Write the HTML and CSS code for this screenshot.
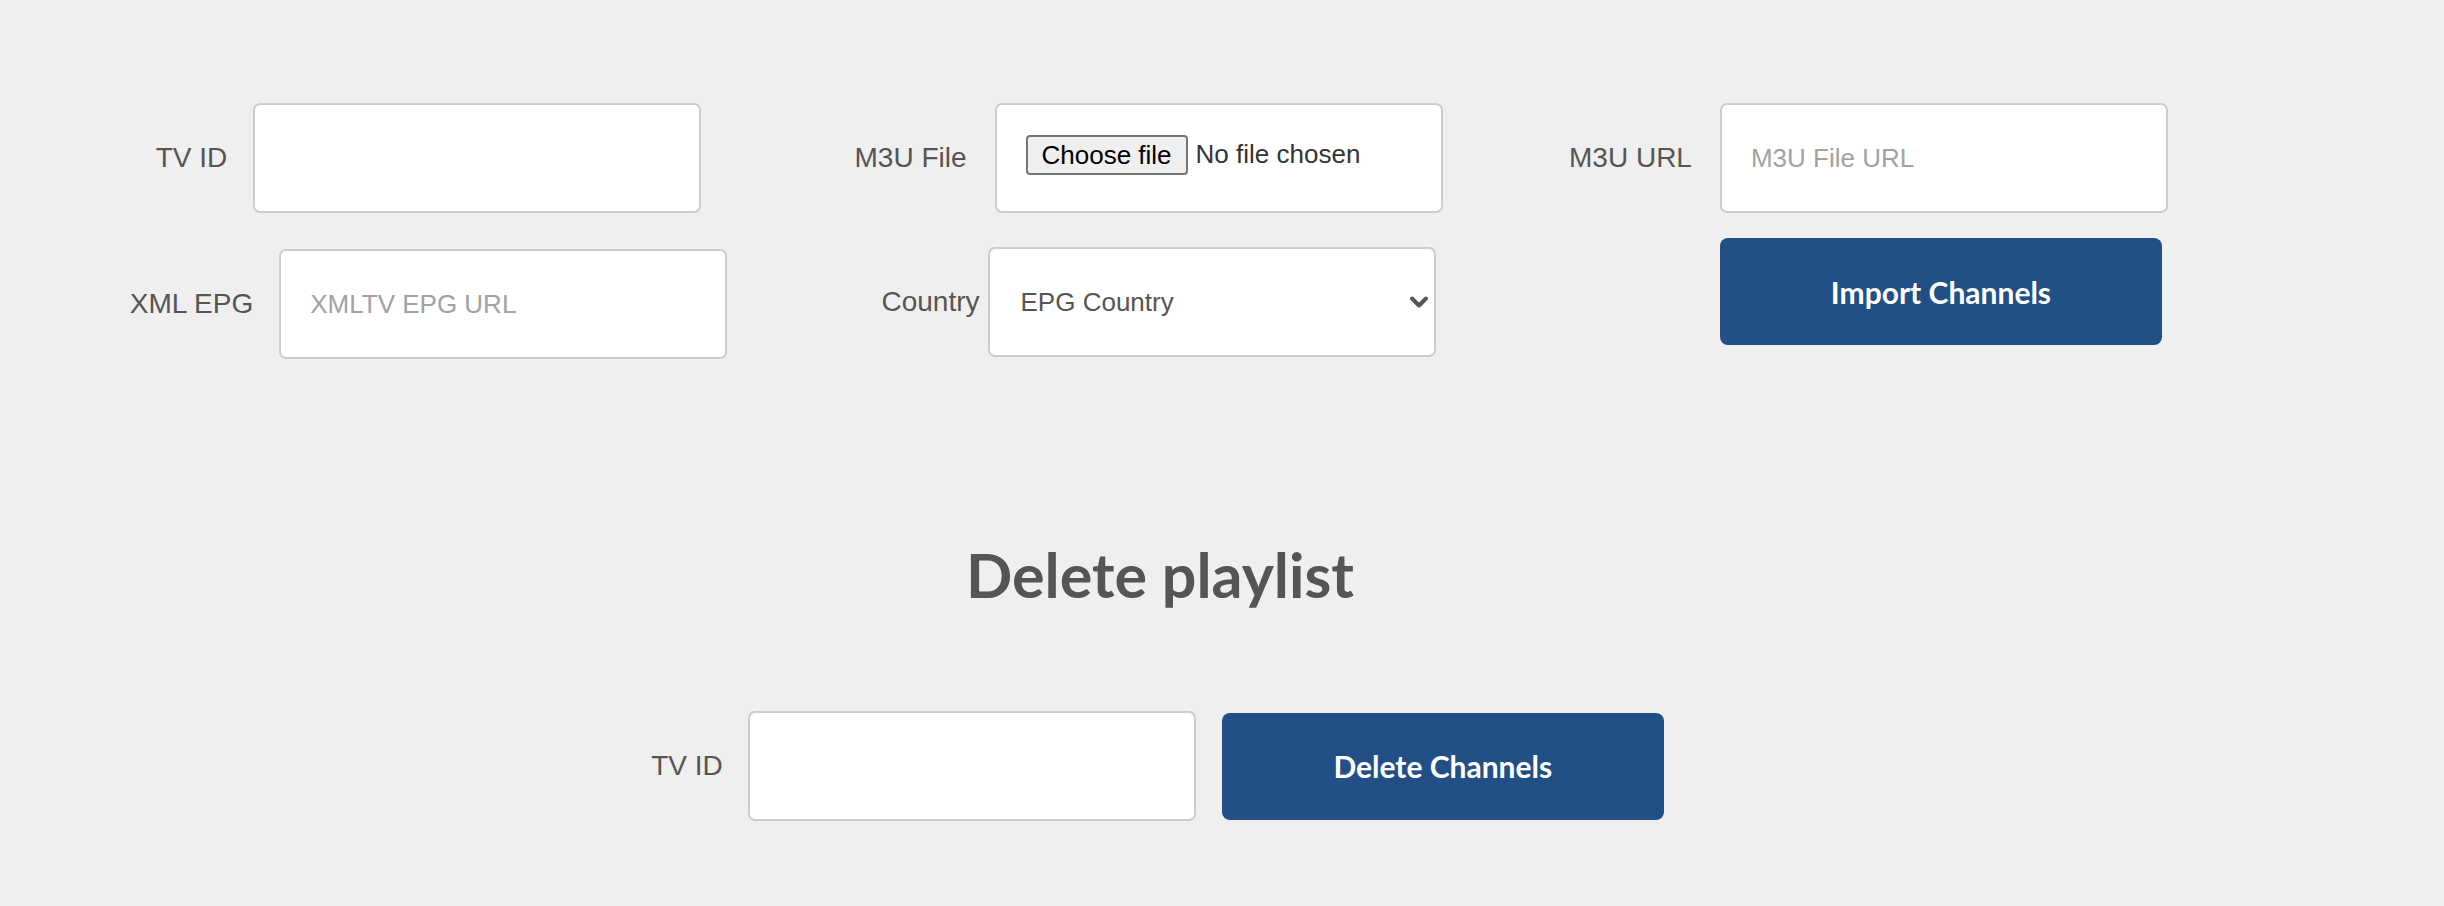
FILE: index.html
```html
<!DOCTYPE html>
<html lang="en">
<head>
<meta charset="utf-8">
<title>Channels</title>
<link rel="stylesheet" href="styles.css">
</head>
<body>
<main class="page">
  <section class="import-grid">
    <div class="col col-1">
      <div class="row">
        <label class="label" for="tvid">TV ID</label>
        <input class="box" id="tvid" type="text">
      </div>
      <div class="row">
        <label class="label" for="xmlepg">XML EPG</label>
        <input class="box" id="xmlepg" type="text" placeholder="XMLTV EPG URL">
      </div>
    </div>
    <div class="col col-2">
      <div class="row">
        <span class="label">M3U File</span>
        <div class="box file-box">
          <label class="file-btn" for="m3ufile">Choose file</label>
          <span class="file-name">No file chosen</span>
          <input class="file-input" id="m3ufile" type="file">
        </div>
      </div>
      <div class="row row-country">
        <label class="label" for="country">Country</label>
        <div class="select-wrap">
          <select class="box select" id="country">
            <option>EPG Country</option>
          </select>
          <svg class="chevron" width="18" height="12" viewBox="0 0 18 12" aria-hidden="true">
            <path d="M2 2.5 L9 9.5 L16 2.5" fill="none" stroke="#555" stroke-width="4" stroke-linecap="round" stroke-linejoin="round"/>
          </svg>
        </div>
      </div>
    </div>
    <div class="col col-3">
      <label class="label" for="m3uurl">M3U URL</label>
      <input class="box" id="m3uurl" type="text" placeholder="M3U File URL">
      <button class="btn btn-import" type="button">Import Channels</button>
    </div>
  </section>

  <h2 class="heading">Delete playlist</h2>

  <section class="delete-row">
    <label class="label" for="deltvid">TV ID</label>
    <input class="box" id="deltvid" type="text">
    <button class="btn" type="button">Delete Channels</button>
  </section>
</main>
</body>
</html>
```

FILE: styles.css
```css
* {
  box-sizing: border-box;
}

html, body {
  margin: 0;
  padding: 0;
  background: #efefef;
}

body {
  font-family: "Liberation Sans", Arial, sans-serif;
  color: #555;
}

.page {
  width: 2320px;
  padding-top: 103px;
}

.import-grid {
  display: grid;
  grid-template-columns: repeat(3, 720px);
  align-items: start;
  margin-left: 68.5px;
}

.col {
  display: flex;
  flex-direction: column;
  align-items: center;
}

.col-1 {
  gap: 36px;
}

.col-1 .row {
  gap: 26px;
}

.col-2 {
  gap: 34px;
}

.row {
  display: flex;
  align-items: center;
  justify-content: center;
  gap: 28px;
}

.row-country {
  gap: 8px;
  padding-left: 20px;
}

.col-3 {
  display: grid;
  grid-template-columns: auto 448px;
  column-gap: 28px;
  row-gap: 25px;
  justify-content: center;
  align-content: start;
  align-items: center;
}

.col-3 .btn-import {
  grid-column: 2;
}

.label {
  font-size: 28px;
  color: #555;
  white-space: nowrap;
}

.box {
  width: 448px;
  height: 110px;
  border: 2px solid #cdcdcd;
  border-radius: 7px;
  background: #fff;
  padding: 0 29px;
  font-family: "Liberation Sans", Arial, sans-serif;
  font-size: 26px;
  color: #555;
  outline: none;
  margin: 0;
}

.box::placeholder {
  color: #a2a2a2;
}

.file-box {
  position: relative;
  display: flex;
  align-items: center;
  padding: 0 0 7px 29px;
}

.file-btn {
  font-size: 26px;
  line-height: 32px;
  color: #000;
  background: #efefef;
  border: 2px solid #767676;
  border-radius: 4px;
  padding: 2px 14px;
  margin-right: 8px;
  cursor: pointer;
}

.file-name {
  font-size: 26px;
  color: #333;
  white-space: nowrap;
}

.file-input {
  position: absolute;
  width: 1px;
  height: 1px;
  opacity: 0;
  overflow: hidden;
}

.select-wrap {
  position: relative;
  display: flex;
}

.select {
  appearance: none;
  -webkit-appearance: none;
  height: 110px;
  padding-left: 31px;
  color: #555;
}

.chevron {
  position: absolute;
  right: 8px;
  top: 49px;
  pointer-events: none;
}

.btn {
  width: 442px;
  height: 107px;
  border: none;
  border-radius: 8px;
  background: #224f85;
  color: #fff;
  font-family: Lato, "Liberation Sans", sans-serif;
  font-weight: 700;
  font-size: 30px;
  margin: 0;
  padding: 0;
}

.heading {
  margin: 179px 0 0;
  text-align: center;
  font-family: Lato, "Liberation Sans", sans-serif;
  font-weight: 700;
  font-size: 61px;
  line-height: 1.2;
  color: #555;
}

.delete-row {
  display: flex;
  justify-content: center;
  align-items: center;
  margin-top: 100px;
  padding-right: 5px;
}

.delete-row .label {
  margin-right: 25px;
}

.delete-row .btn {
  margin-left: 26px;
}
```
